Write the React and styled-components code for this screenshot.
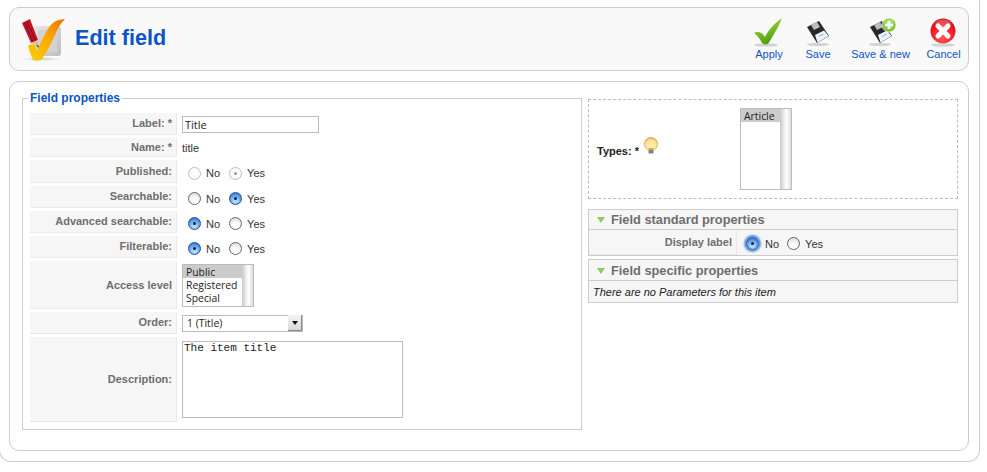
import React from 'react';
import styled, { createGlobalStyle, css } from 'styled-components';

const GlobalStyle = createGlobalStyle`
  html, body {
    margin: 0;
    padding: 0;
    background: #fff;
    overflow: hidden;
  }
  body {
    font-family: "Liberation Sans", Arial, sans-serif;
    font-size: 11px;
    color: #333;
  }
`;

const Frame = styled.div`
  box-sizing: border-box;
  width: 981px;
  height: 462px;
  margin-left: -1px;
  padding: 7px 10px 10px 9px;
  border: 1px solid #ccc;
  border-top: none;
  border-radius: 0 0 12px 12px;
`;

const Header = styled.header`
  box-sizing: border-box;
  height: 64px;
  display: flex;
  align-items: center;
  justify-content: space-between;
  background: #f9f9f9;
  border: 1px solid #ccc;
  border-radius: 10px;
`;

const TitleArea = styled.div`
  display: flex;
  align-items: center;
  gap: 7px;
  padding-left: 10px;
`;

const Title = styled.h1`
  margin: -2px 0 0;
  font-size: 21.6px;
  font-weight: bold;
  color: #0b55c4;
`;

const Toolbar = styled.nav`
  display: flex;
  align-self: flex-start;
  padding-top: 7px;
  margin-right: -1px;
`;

const ToolButton = styled.a`
  width: ${(props) => props.$width}px;
  display: flex;
  flex-direction: column;
  align-items: center;
  color: #0b55c4;
  font-size: 11px;
  line-height: 14px;
  svg {
    display: block;
  }
`;

const Content = styled.main`
  box-sizing: border-box;
  height: 370px;
  margin-top: 10px;
  padding: 9px 10px 0 12px;
  display: flex;
  align-items: flex-start;
  gap: 6px;
  border: 1px solid #ccc;
  border-radius: 10px;
`;

const FieldSet = styled.fieldset`
  box-sizing: border-box;
  width: 560px;
  margin: 0;
  padding: 8px 0 7px 7px;
  border: 1px solid #ccc;
`;

const Legend = styled.legend`
  margin-left: -2px;
  padding: 0 2px;
  font-size: 12px;
  line-height: 14px;
  font-weight: bold;
  color: #0b55c4;
`;

const Rows = styled.div`
  display: flex;
  flex-direction: column;
  gap: 3px;
`;

const Row = styled.div`
  display: flex;
  height: ${(props) => props.$height}px;
`;

const Label = styled.div`
  box-sizing: border-box;
  flex: none;
  width: ${(props) => props.$width || 147}px;
  padding-right: 4px;
  padding-bottom: ${(props) => props.$lift || 0}px;
  display: flex;
  align-items: center;
  justify-content: flex-end;
  background: #f6f6f6;
  border-right: 1px solid #e9e9e9;
  border-bottom: 1px solid #e9e9e9;
  color: #6e6e6e;
  font-weight: bold;
  font-size: 11px;
`;

const Field = styled.div`
  display: flex;
  align-items: center;
  padding-left: ${(props) => props.$pad ?? 5}px;
  padding-top: ${(props) => props.$top || 0}px;
  color: #333;
  font-size: 11px;
`;

const TextInput = styled.input`
  box-sizing: border-box;
  width: 137px;
  height: 17px;
  margin: 0;
  padding: 0 2px;
  border: 1px solid #bbb;
  background: #fff;
  font: 11px "Open Sans", "Liberation Sans", sans-serif;
  color: #222;
  outline: none;
`;

const TextArea = styled.textarea`
  box-sizing: border-box;
  display: block;
  width: 221px;
  height: 77px;
  margin: 0;
  padding: 0 1px;
  border: 1px solid #bbb;
  resize: none;
  outline: none;
  font: 11px/12px "Liberation Mono", monospace;
  color: #222;
`;

const RadioGroup = styled.div`
  display: flex;
  align-items: center;
`;

const RadioMark = styled.span`
  box-sizing: border-box;
  flex: none;
  width: 13px;
  height: 13px;
  border-radius: 50%;
  display: flex;
  align-items: center;
  justify-content: center;
  border: 1px solid #666;
  background: radial-gradient(circle at 50% 80%, #fff 30%, #dedede 85%);
  ${(props) =>
    props.$checked &&
    css`
      border-color: #1f4f96;
      background: radial-gradient(circle at 50% 75%, #b4d8fd 15%, #2a78d8 85%);
      &::after {
        content: '';
        width: 3px;
        height: 3px;
        border-radius: 50%;
        background: #0d1c33;
      }
    `}
  ${(props) =>
    props.$disabled &&
    css`
      border-color: #bdbdbd;
      background: #fbfbfb;
      &::after {
        background: #999;
      }
    `}
  ${(props) =>
    props.$focus &&
    css`
      box-shadow: 0 0 2px 2px #5c94dc;
    `}
`;

const RadioText = styled.span`
  margin-left: ${(props) => props.$lead || 5}px;
  margin-right: ${(props) => props.$gap || 0}px;
`;

const ListBox = styled.div`
  box-sizing: border-box;
  width: ${(props) => props.$width}px;
  height: ${(props) => props.$height}px;
  display: flex;
  border: 1px solid #bbb;
  background: #fff;
  font: 10.4px/15px "Open Sans", "Liberation Sans", sans-serif;
  color: #222;
`;

const Options = styled.div`
  flex: 1;
`;

const Option = styled.div`
  height: 13px;
  padding-left: 3px;
  background: ${(props) => (props.$selected ? '#cbcbcb' : 'transparent')};
`;

const ScrollTrack = styled.div`
  flex: none;
  width: 11px;
  background: linear-gradient(to right, #c9c9c9, #f4f4f4 45%, #fff 60%, #dcdcdc);
`;

const SelectBox = styled.div`
  box-sizing: border-box;
  width: 121px;
  height: 17px;
  padding-left: 4px;
  display: flex;
  align-items: center;
  justify-content: space-between;
  border: 1px solid #bbb;
  background: #fff;
  font: 10.4px "Open Sans", "Liberation Sans", sans-serif;
  color: #222;
`;

const SelectArrow = styled.span`
  width: 13px;
  height: 15px;
  display: flex;
  align-items: center;
  justify-content: center;
  background: linear-gradient(#f4f4f4, #d8d8d8);
  border-right: 1px solid #888;
  border-bottom: 1px solid #888;
  &::after {
    content: '';
    border-left: 3px solid transparent;
    border-right: 3px solid transparent;
    border-top: 4px solid #111;
  }
`;

const Side = styled.aside`
  box-sizing: border-box;
  width: 370px;
  margin-top: 8px;
  display: flex;
  flex-direction: column;
`;

const TypesBox = styled.div`
  box-sizing: border-box;
  height: 100px;
  padding: 8px 0 0 8px;
  display: flex;
  align-items: flex-start;
  border: 1px dashed #bbb;
`;

const TypesLabel = styled.div`
  width: 143px;
  height: 86px;
  display: flex;
  align-items: center;
  font-weight: bold;
  font-size: 11px;
  color: #222;
  svg {
    margin: -11px 0 0 4px;
  }
`;

const Panel = styled.section`
  box-sizing: border-box;
  margin-top: ${(props) => props.$top}px;
  background: #f6f6f6;
  border: 1px solid #ccc;
`;

const PanelHead = styled.div`
  box-sizing: border-box;
  height: ${(props) => props.$height}px;
  padding-left: 8px;
  display: flex;
  align-items: center;
  gap: 6px;
  font-size: 12.8px;
  font-weight: bold;
  color: #6e6e6e;
  border-bottom: 1px solid #ccc;
`;

const Arrow = styled.span`
  width: 0;
  height: 0;
  margin-top: 1px;
  border-left: 4.5px solid transparent;
  border-right: 4.5px solid transparent;
  border-top: 6px solid #8ccb62;
`;

const PanelRow = styled.div`
  display: flex;
  height: 25px;
`;

const EmptyNote = styled.div`
  height: 21px;
  padding-left: 4px;
  display: flex;
  align-items: center;
  font-size: 11px;
  font-style: italic;
  color: #222;
`;

const Logo = () => (
  <svg width="48" height="48" viewBox="0 0 48 48">
    <defs>
      <linearGradient id="logoCheck" x1="0" y1="1" x2="1" y2="0">
        <stop offset="0" stopColor="#fdd000" />
        <stop offset="0.55" stopColor="#fba800" />
        <stop offset="1" stopColor="#f26f00" />
      </linearGradient>
      <linearGradient id="logoBox" x1="0" y1="0" x2="1" y2="1">
        <stop offset="0" stopColor="#e8e8e8" />
        <stop offset="1" stopColor="#bdbdbd" />
      </linearGradient>
      <radialGradient id="logoShadow">
        <stop offset="0" stopColor="#aaa" stopOpacity="0.6" />
        <stop offset="1" stopColor="#aaa" stopOpacity="0" />
      </radialGradient>
    </defs>
    <ellipse cx="22" cy="44" rx="20" ry="2" fill="url(#logoShadow)" />
    <rect x="14" y="11" width="27" height="30" rx="3" fill="url(#logoBox)" />
    <rect x="18" y="15" width="19" height="22" fill="#d2d2d2" />
    <path d="M8 31C10 29 13 29 15 31L17 36C21 27 27 13 33 8C37 5 41 4 45 4C41 8 37 14 35 20C31 29 26 38 22 44C19 46 15 46 13 45C11 40 9 36 8 31Z" fill="url(#logoCheck)" />
    <path d="M2 8L10 4L18 25L11 28Z" fill="#c8142a" />
    <path d="M4.5 7L13 27M7 6L15.5 26" stroke="#7d0b18" strokeWidth="1" />
    <path d="M11 28L18 25L18.5 33Z" fill="#e3c08c" />
    <path d="M16.5 30.5L18.3 30L18.5 33Z" fill="#333" />
  </svg>
);

const ToolShadow = ({ cx = 16, cy = 29, rx = 13 }) => (
  <ellipse cx={cx} cy={cy} rx={rx} ry="1.6" fill="#999" opacity="0.4" />
);

const ApplyIcon = () => (
  <svg width="32" height="32" viewBox="0 0 32 32">
    <defs>
      <linearGradient id="applyFill" x1="0" y1="0" x2="0.4" y2="1">
        <stop offset="0" stopColor="#b4e03c" />
        <stop offset="1" stopColor="#4aa012" />
      </linearGradient>
    </defs>
    <ToolShadow cx={13} cy={30} rx={12} />
    <path d="M1 18C5 16 9 17 12 22C16 14 22 8 29 3C26 11 20 21 15 29C12 30 10 29 9 28C7 24 4 20 1 18Z" fill="url(#applyFill)" />
  </svg>
);

const Floppy = () => (
  <g>
    <path d="M5 12L17 6L27 21L15 28Z" fill="#26282b" />
    <path d="M9 10L15 7L18 12L12 15Z" fill="#b9bcc0" />
    <path d="M13 20L22 15.5L26.5 21L15.5 27.5Z" fill="#eef3fa" />
    <path d="M17 21.5L21.5 19" stroke="#7ea4d8" strokeWidth="1" />
  </g>
);

const SaveIcon = () => (
  <svg width="32" height="32" viewBox="0 0 32 32">
    <ToolShadow cy={29.5} rx={11} />
    <Floppy />
  </svg>
);

const SaveNewIcon = () => (
  <svg width="32" height="32" viewBox="0 0 32 32">
    <defs>
      <radialGradient id="plusFill" cx="0.5" cy="0.35" r="0.7">
        <stop offset="0" stopColor="#c8ec8a" />
        <stop offset="1" stopColor="#5fb31e" />
      </radialGradient>
    </defs>
    <ToolShadow cx={15} cy={29.5} rx={11} />
    <Floppy />
    <circle cx="24" cy="10" r="7" fill="url(#plusFill)" stroke="#fff" strokeWidth="0.6" />
    <path d="M24 6V14M20 10H28" stroke="#fff" strokeWidth="2.6" />
  </svg>
);

const CancelIcon = () => (
  <svg width="32" height="32" viewBox="0 0 32 32">
    <defs>
      <radialGradient id="cancelFill" cx="0.5" cy="0.75" r="0.8">
        <stop offset="0" stopColor="#ff5a5a" />
        <stop offset="0.7" stopColor="#e8141c" />
        <stop offset="1" stopColor="#b80d12" />
      </radialGradient>
    </defs>
    <ToolShadow cx={15} cy={30} rx={12} />
    <circle cx="15" cy="16" r="12.5" fill="url(#cancelFill)" />
    <ellipse cx="15" cy="9" rx="8" ry="4.5" fill="#fff" opacity="0.25" />
    <path d="M10 11L20 21M20 11L10 21" stroke="#fff" strokeWidth="5" strokeLinecap="round" />
  </svg>
);

const BulbIcon = () => (
  <svg width="16" height="18" viewBox="0 0 16 18">
    <defs>
      <radialGradient id="bulbFill" cx="0.5" cy="0.6" r="0.6">
        <stop offset="0" stopColor="#fff6c2" />
        <stop offset="0.7" stopColor="#ffe08c" />
        <stop offset="1" stopColor="#e8963a" />
      </radialGradient>
    </defs>
    <circle cx="8" cy="7" r="6.6" fill="url(#bulbFill)" stroke="#e5a050" strokeWidth="0.7" />
    <rect x="5.5" y="11" width="5" height="2" fill="#e3a23c" />
    <rect x="5.5" y="13" width="5" height="3.5" rx="1" fill="#77808c" />
  </svg>
);

const YesNo = ({ value, disabled, focus, gap = 9 }) => (
  <RadioGroup>
    <RadioMark $checked={value === 'no'} $disabled={disabled} $focus={focus} />
    <RadioText $lead={focus ? 6 : 5} $gap={gap}>No</RadioText>
    <RadioMark $checked={value === 'yes'} $disabled={disabled} />
    <RadioText>Yes</RadioText>
  </RadioGroup>
);

const App = () => {
  return (
    <>
      <GlobalStyle />
      <Frame>
        <Header>
          <TitleArea>
            <Logo />
            <Title>Edit field</Title>
          </TitleArea>
          <Toolbar>
            <ToolButton $width={48}>
              <ApplyIcon />
              Apply
            </ToolButton>
            <ToolButton $width={50}>
              <SaveIcon />
              Save
            </ToolButton>
            <ToolButton $width={75}>
              <SaveNewIcon />
              Save &amp; new
            </ToolButton>
            <ToolButton $width={51}>
              <CancelIcon />
              Cancel
            </ToolButton>
          </Toolbar>
        </Header>
        <Content>
          <FieldSet>
            <Legend>Field properties</Legend>
            <Rows>
              <Row $height={22}>
                <Label $lift={2}>Label: *</Label>
                <Field>
                  <TextInput readOnly value="Title" />
                </Field>
              </Row>
              <Row $height={19}>
                <Label>Name: *</Label>
                <Field>title</Field>
              </Row>
              <Row $height={23}>
                <Label>Published:</Label>
                <Field $pad={11} $top={3}>
                  <YesNo value="yes" disabled />
                </Field>
              </Row>
              <Row $height={22}>
                <Label $lift={2}>Searchable:</Label>
                <Field $pad={11} $top={3}>
                  <YesNo value="yes" />
                </Field>
              </Row>
              <Row $height={22}>
                <Label $lift={2}>Advanced searchable:</Label>
                <Field $pad={11} $top={3}>
                  <YesNo value="no" />
                </Field>
              </Row>
              <Row $height={22}>
                <Label $lift={2}>Filterable:</Label>
                <Field $pad={11} $top={3}>
                  <YesNo value="no" />
                </Field>
              </Row>
              <Row $height={48}>
                <Label>Access level</Label>
                <Field>
                  <ListBox $width={72} $height={43}>
                    <Options>
                      <Option $selected>Public</Option>
                      <Option>Registered</Option>
                      <Option>Special</Option>
                    </Options>
                    <ScrollTrack />
                  </ListBox>
                </Field>
              </Row>
              <Row $height={22}>
                <Label $lift={2}>Order:</Label>
                <Field>
                  <SelectBox>
                    1 (Title)
                    <SelectArrow />
                  </SelectBox>
                </Field>
              </Row>
              <Row $height={85}>
                <Label>Description:</Label>
                <Field>
                  <TextArea readOnly value="The item title" />
                </Field>
              </Row>
            </Rows>
          </FieldSet>
          <Side>
            <TypesBox>
              <TypesLabel>
                Types: *
                <BulbIcon />
              </TypesLabel>
              <ListBox $width={52} $height={82}>
                <Options>
                  <Option $selected>Article</Option>
                </Options>
                <ScrollTrack />
              </ListBox>
            </TypesBox>
            <Panel $top={10}>
              <PanelHead $height={20}>
                <Arrow />
                Field standard properties
              </PanelHead>
              <PanelRow>
                <Label $width={148}>Display label</Label>
                <Field $pad={9} $top={2}>
                  <YesNo value="no" focus gap={8} />
                </Field>
              </PanelRow>
            </Panel>
            <Panel $top={3}>
              <PanelHead $height={21}>
                <Arrow />
                Field specific properties
              </PanelHead>
              <EmptyNote>There are no Parameters for this item</EmptyNote>
            </Panel>
          </Side>
        </Content>
      </Frame>
    </>
  );
};

export default App;
